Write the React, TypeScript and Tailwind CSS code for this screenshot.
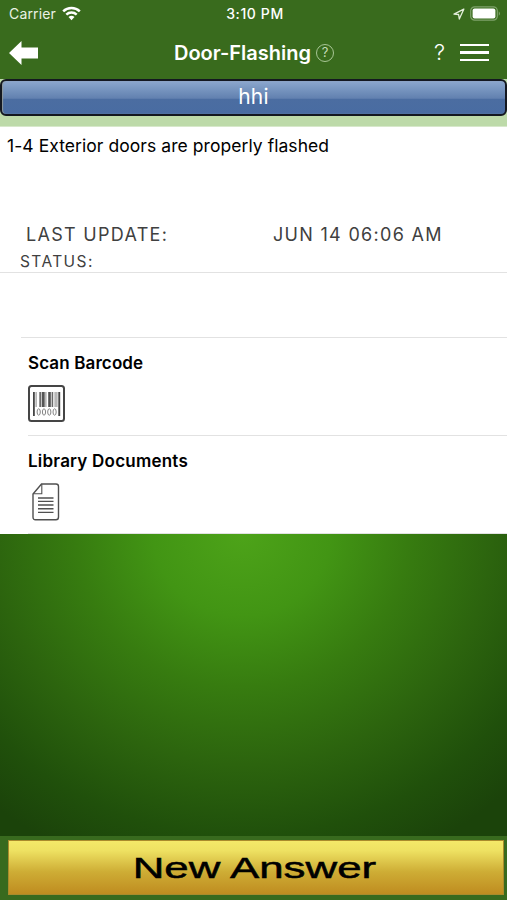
import type { ReactNode } from 'react';

const BARS = [
  { x: 5, w: 1.8, h: 24, color: '#454545' },
  { x: 7.6, w: 1, h: 15, color: '#8a8a8a' },
  { x: 11.3, w: 2, h: 15, color: '#6a6a6a' },
  { x: 13.9, w: 2.8, h: 15, color: '#555555' },
  { x: 17.4, w: 1, h: 15, color: '#8a8a8a' },
  { x: 20.2, w: 2.6, h: 15, color: '#505050' },
  { x: 23.6, w: 1.6, h: 15, color: '#6a6a6a' },
  { x: 26.6, w: 1, h: 15, color: '#8a8a8a' },
  { x: 28.4, w: 1, h: 15, color: '#8a8a8a' },
  { x: 30.3, w: 1.9, h: 24, color: '#454545' },
];

const WifiIcon = () => (
  <svg className="h-[15px] w-[19px]" viewBox="0 0 19 15" fill="none" stroke="white" strokeWidth="2.5">
    <path d="M1.2 5.4C5.8 .9 13.2 .9 17.8 5.4" />
    <path d="M4.3 8.7C7.3 5.9 11.7 5.9 14.7 8.7" />
    <path d="M6.5 11Q9.5 8.5 12.5 11L9.5 14.3Z" fill="white" stroke="none" />
  </svg>
);

const LocationIcon = () => (
  <svg className="h-3 w-3" viewBox="0 0 12 12" fill="none" stroke="#e4efdc" strokeWidth="1.3">
    <path d="M10.8 1.2L1 6.1L5.6 6.5L6.3 11Z" strokeLinejoin="round" />
  </svg>
);

const BatteryIcon = () => (
  <svg className="h-[15px] w-[31px]" viewBox="0 0 31 15">
    <rect x=".7" y=".8" width="26.6" height="13.4" rx="4" fill="none" stroke="#7fa36b" strokeWidth="1.2" />
    <rect x="2.6" y="2.6" width="22.8" height="9.8" rx="2" fill="white" />
    <path d="M28.8 5.2Q30.8 7.5 28.8 9.8Z" fill="#8fb07c" />
  </svg>
);

const BarcodeIcon = () => (
  <svg className="h-[37px] w-[37px]" viewBox="0 0 37 37">
    <rect x="1" y="1" width="35" height="35" rx="2.5" fill="white" stroke="#454545" strokeWidth="2" />
    {BARS.map(({ x, w, h, color }) => (
      <rect key={x} x={x} y="7" width={w} height={h} fill={color} />
    ))}
    {[10.7, 16, 21.3, 26.6].map((x) => (
      <ellipse key={x} cx={x} cy="27" rx="1.6" ry="3.2" fill="none" stroke="#858585" strokeWidth="1" />
    ))}
  </svg>
);

const DocumentIcon = () => (
  <svg className="h-[38px] w-[28px]" viewBox="0 0 28 38" fill="none" stroke="#505050" strokeWidth="1.4">
    <path d="M9.5 1H24Q26.5 1 26.5 3.5V34Q26.5 36.8 24 36.8H3.5Q1 36.8 1 34V11Z" />
    <path d="M9.8 1V10.8H1" strokeWidth="1.1" />
    <path d="M6 15H21.5M6 18.4H21.5M6 22H21.5M6 25.8H21.5M6 29.4H21.5" />
  </svg>
);

const ListItem = ({ title, spacing, children }: { title: string; spacing: string; children: ReactNode }) => (
  <div className="ml-7 h-[98px] border-b border-[#e2e2e2] pt-[14px]">
    <h2 className={`h-[22px] whitespace-nowrap text-[17px] leading-[22px] font-semibold ${spacing}`}>{title}</h2>
    <div className="mt-[11px]">{children}</div>
  </div>
);

const App = () => {
  return (
    <div className="flex h-[900px] w-[507px] flex-col overflow-hidden bg-white font-['Inter',sans-serif] text-black">
      <header className="h-[79px] bg-[#396b1d] text-white">
        {/* Status bar */}
        <div className="grid h-[27px] grid-cols-3 items-center pl-[9px] pr-[6px] text-[14px]">
          <div className="flex items-center gap-[6px] text-[#eaf2e5]">
            <span className="tracking-[0.15px]">Carrier</span>
            <WifiIcon />
          </div>
          <div className="text-center text-[14px] font-medium tracking-[0.6px]">3:10 PM</div>
          <div className="flex items-center justify-end gap-[5px]">
            <LocationIcon />
            <BatteryIcon />
          </div>
        </div>
        {/* Navigation */}
        <div className="flex h-[51px] items-center pl-[9px] pr-[18px]">
          <svg className="h-6 w-[29px]" viewBox="0 0 29 24" fill="white">
            <path d="M0 12L12.5 0V6.5H29V17.5H12.5V24Z" />
          </svg>
          <h1 className="ml-[136px] whitespace-nowrap text-[20px] font-semibold">Door-Flashing</h1>
          <div className="ml-[5px] flex h-[18px] w-[18px] items-center justify-center rounded-full border border-[#a8c695] text-[13px] text-[#c5dab8]">?</div>
          <div className="ml-auto flex items-center gap-[15px]">
            <span className="text-[22px] font-light">?</span>
            <div className="flex w-[29px] flex-col gap-[5px]">
              <div className="h-[2.5px] bg-white" />
              <div className="h-[2.5px] bg-white" />
              <div className="h-[2.5px] bg-white" />
            </div>
          </div>
        </div>
      </header>

      <div className="h-[48px] border-b border-[#d7e8cb] bg-[#bddaa9]">
        <button className="block h-[37px] w-full rounded-[6px] border-2 border-[#141820] bg-[linear-gradient(#8da7cd_0%,#809dc5_15%,#6281b0_52%,#4b6da1_56%,#496ca2_100%)] pb-[2px] text-[21px] leading-[30px] tracking-[0.2px] text-white shadow-[inset_1px_0_1px_#8f9a9c]">
          hhi
        </button>
      </div>

      <section className="h-[146px] border-b border-[#e2e2e2]">
        <p className="h-[94px] pt-[7px] pl-[7px] text-[17.5px] leading-6 tracking-[0.06px]">
          1-4 Exterior doors are properly flashed
        </p>
        <div className="flex h-[26px] items-center pl-[26px] text-[18px] tracking-[1.3px] text-[#404040]">
          <span className="w-[247px]">LAST UPDATE:</span>
          <span>JUN 14 06:06 AM</span>
        </div>
        <div className="pt-[3px] pl-[20px] text-[15.5px] leading-[23px] tracking-[1.4px] text-[#404040]">STATUS:</div>
      </section>
      <div className="ml-[21px] h-[65px] border-b border-[#e2e2e2]" />

      <ListItem title="Scan Barcode" spacing="tracking-[0.12px]">
        <BarcodeIcon />
      </ListItem>
      <ListItem title="Library Documents" spacing="tracking-[0.22px]">
        <div className="pl-1">
          <DocumentIcon />
        </div>
      </ListItem>

      <main className="grow bg-[radial-gradient(ellipse_385px_355px_at_242px_0px,#4da319_0%,#429514_23%,#377c10_43%,#2c640e_65%,#20500b_85%,#1b430a_100%)]" />

      <footer className="h-[64px] bg-[#386a1e] pt-[4px] pr-[3px] pb-[5px] pl-[8px]">
        <button className="flex h-[55px] w-full items-center justify-center border border-[#a98b2c] bg-[linear-gradient(#f4e969_0%,#eee162_18%,#cead35_58%,#bf8c20_100%)]">
          <span className="mr-[3px] inline-block scale-x-[1.46] font-['Liberation_Sans',sans-serif] text-[30px] leading-none [-webkit-text-stroke:0.5px_black]">
            New Answer
          </span>
        </button>
      </footer>
    </div>
  );
};

export default App;
